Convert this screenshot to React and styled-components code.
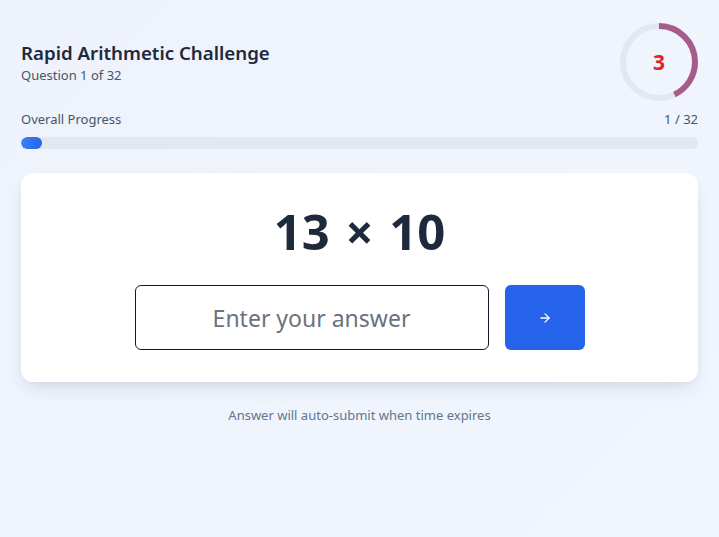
import styled, { createGlobalStyle } from "styled-components"
import { useState } from "react"

const GlobalStyle = createGlobalStyle`
    html, body {
        margin: 0;
        padding: 0;
        height: 100%;
    }
    body {
        font-family: "Noto Sans", "Open Sans", sans-serif;
        background: linear-gradient(135deg, #edf2fb 0%, #eff4fd 60%, #f1f5fd 100%);
        color: #1e293b;
    }
`

export default function App() {
    const [answer, setAnswer] = useState("")
    const total = 32
    const current = 1
    const timeLeft = 3
    const timeMax = 7

    const radius = 36
    const circumference = 2 * Math.PI * radius
    const dash = circumference * (timeLeft / timeMax)

    return (<>
        <GlobalStyle />
        <Page>
            <Header>
                <div>
                    <Title>Rapid Arithmetic Challenge</Title>
                    <Subtitle>Question {current} of {total}</Subtitle>
                </div>
                <Timer>
                    <svg width="80" height="80" viewBox="0 0 80 80">
                        <circle cx="40" cy="40" r={radius} fill="none" stroke="#e2e8f0" strokeWidth="6" />
                        <circle
                            cx="40" cy="40" r={radius} fill="none"
                            stroke="#a65b8b" strokeWidth="6"
                            strokeDasharray={`${dash} ${circumference}`}
                            transform="rotate(-90 40 40)"
                        />
                    </svg>
                    <TimerValue>{timeLeft}</TimerValue>
                </Timer>
            </Header>

            <ProgressLabels>
                <span>Overall Progress</span>
                <span>{current} / {total}</span>
            </ProgressLabels>
            <Track>
                <Fill style={{ width: `${(current / total) * 100}%` }} />
            </Track>

            <Card>
                <Equation>13 × 10</Equation>
                <AnswerRow>
                    <AnswerInput
                        autoFocus
                        placeholder="Enter your answer"
                        value={answer}
                        onChange={e => setAnswer(e.target.value)}
                    />
                    <SubmitButton aria-label="Submit">
                        <svg width="14" height="14" viewBox="0 0 24 24" fill="none" stroke="#fff" strokeWidth="2.2" strokeLinecap="round" strokeLinejoin="round">
                            <path d="M5 12h14" />
                            <path d="M12 5l7 7-7 7" />
                        </svg>
                    </SubmitButton>
                </AnswerRow>
            </Card>

            <Hint>Answer will auto-submit when time expires</Hint>
        </Page>
    </>)
}

const Page = styled.div`
    min-height: 100vh;
    box-sizing: border-box;
    padding: 22px 21px;
`

const Header = styled.div`
    display: flex;
    align-items: center;
    justify-content: space-between;
`

const Title = styled.h1`
    margin: 0;
    font-size: 18.7px;
    font-weight: 600;
    line-height: 25px;
    color: #1e293b;
`

const Subtitle = styled.p`
    margin: 1px 0 0;
    font-size: 13px;
    line-height: 18px;
    color: #475569;
`

const Timer = styled.div`
    position: relative;
    width: 80px;
    height: 80px;
    margin-right: -1px;
    svg {
        display: block;
    }
`

const TimerValue = styled.span`
    position: absolute;
    inset: 0;
    display: flex;
    align-items: center;
    justify-content: center;
    font-size: 21px;
    font-weight: 700;
    color: #dc2626;
`

const ProgressLabels = styled.div`
    display: flex;
    justify-content: space-between;
    margin-top: 8px;
    font-size: 13px;
    line-height: 18px;
    color: #475569;
`

const Track = styled.div`
    margin-top: 9px;
    height: 12px;
    border-radius: 6px;
    background: #e2e8f0;
    overflow: hidden;
`

const Fill = styled.div`
    height: 100%;
    border-radius: 6px;
    background: linear-gradient(90deg, #3b82f6, #2563eb);
`

const Card = styled.div`
    margin-top: 24px;
    background: #fff;
    border-radius: 12px;
    box-shadow: 0 10px 20px -6px rgba(30, 41, 59, 0.12), 0 3px 8px -2px rgba(30, 41, 59, 0.06);
    padding: 26px 24px 32px;
    display: flex;
    flex-direction: column;
    align-items: center;
`

const Equation = styled.div`
    font-size: 49px;
    font-weight: 700;
    line-height: 64px;
    color: #1e293b;
    word-spacing: 3px;
`

const AnswerRow = styled.div`
    margin-top: 22px;
    display: flex;
    gap: 16px;
    align-items: stretch;
`

const AnswerInput = styled.input`
    width: 354px;
    height: 65px;
    box-sizing: border-box;
    border: 1px solid #111827;
    border-radius: 6px;
    outline: none;
    font-family: inherit;
    font-size: 23px;
    text-align: center;
    color: #1e293b;
    caret-color: #111;
    &::placeholder {
        color: #6b7280;
    }
`

const SubmitButton = styled.button`
    width: 80px;
    border: none;
    border-radius: 6px;
    background: #2563eb;
    display: flex;
    align-items: center;
    justify-content: center;
    cursor: pointer;
`

const Hint = styled.p`
    margin: 24px 0 0;
    text-align: center;
    font-size: 13px;
    line-height: 18px;
    color: #64748b;
`
